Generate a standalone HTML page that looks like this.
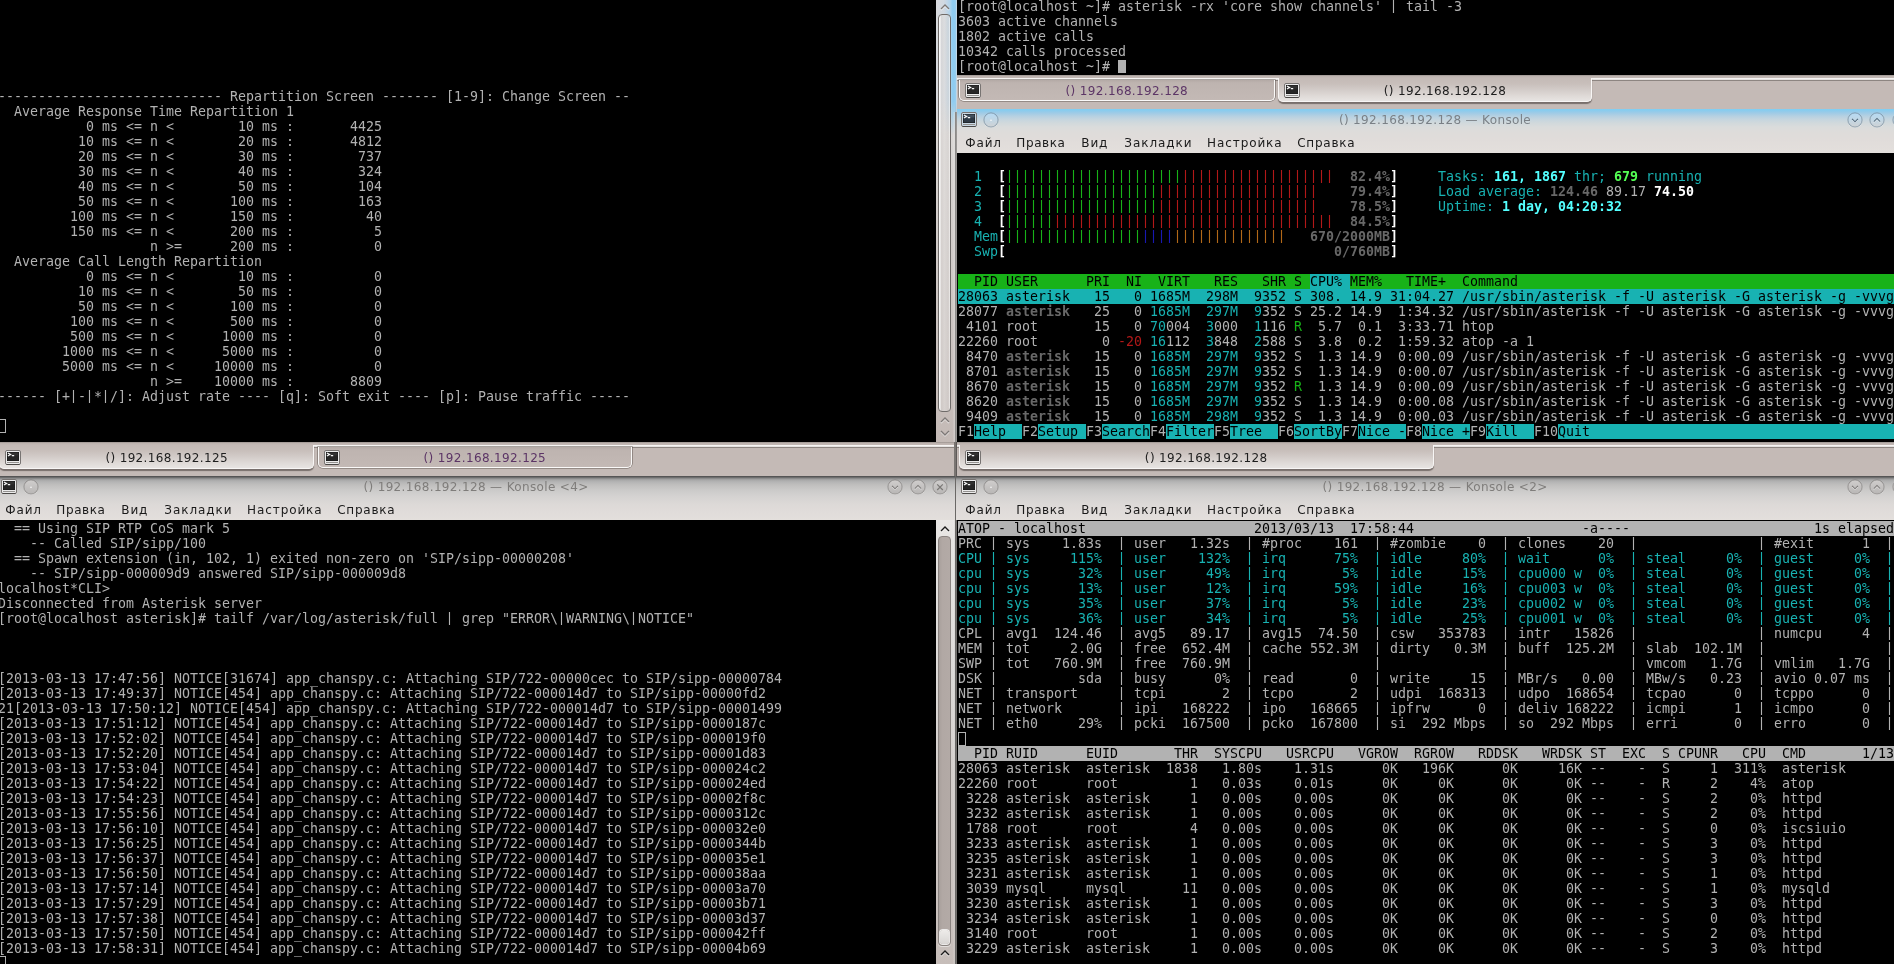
<!DOCTYPE html>
<html lang="ru"><head><meta charset="utf-8"><title>Konsole</title>
<style>
html,body{margin:0;padding:0}
body{width:1894px;height:964px;position:relative;overflow:hidden;background:#c4bab6;font-family:"DejaVu Sans","Liberation Sans",sans-serif;font-size:12px;letter-spacing:.35px;color:#1e1e1e}
#root{position:absolute;left:0;top:0;width:1894px;height:964px;overflow:hidden;will-change:transform}
.term{position:absolute;background:#000;overflow:hidden}
.tx{position:absolute;font-family:"DejaVu Sans Mono","Liberation Mono",monospace;font-size:13.288px;line-height:15px;letter-spacing:.0133px;color:#b2b2b2;white-space:pre}
.ln{height:15px;white-space:pre}
.ln span{display:inline-block;height:15px;vertical-align:top}
.ln span.br{position:relative;left:-.5px;clip-path:inset(1px 0 1px 0)}
.abs{position:absolute}
.cur{position:absolute;width:8px;height:14px;border:1px solid #b2b2b2;box-sizing:border-box}
.menubar{position:absolute;width:1894px;white-space:nowrap;color:#1a1a1a}
.mi{position:absolute;top:0}
.title{position:absolute;height:44px;background:linear-gradient(#4c4c4c 0,#5e5e5e 1px,#7e7e7e 2px,#989898 3px,#a8a8a8 4px,#b5b5b5 6px,#c0bfbe 9px,#cbcac9 14px,#d4d2d1 20px,#dcd9d7 28px,#e0dcda 36px,#e3dfdc 44px)}
.title.act{background:linear-gradient(#80cef2 0,#8ecbec 2px,#9fcbe6 4px,#b4d0e2 7px,#c4d5df 10px,#d1d9dc 14px,#dadcdc 18px,#dedcda 23px,#e0dcda 30px,#e3dfdc 44px)}
.tt{position:absolute;left:0;right:0;top:0;height:22px;line-height:23px;text-align:center;color:#7f7d7b;white-space:nowrap}
.title.act .tt{color:#7a8086}
.tabbar{position:absolute;height:34px;background:linear-gradient(#9c9490 0,#beb4b0 1.5px,#c4bab6 3px)}
.tbl{position:absolute;left:0;right:0;top:3.2px;height:2.4px;background:linear-gradient(#f6f4f3 0,#f6f4f3 48%,#8d8581 60%,#8d8581 88%,#c4bab6 100%)}
.tab{position:absolute;box-sizing:border-box;height:21px;line-height:22px;padding-left:20px;text-align:center;color:#5c3566;white-space:nowrap;background:linear-gradient(#b4aaa6 0,#beb4b0 3px,#c3b9b5 100%);border:1.3px solid #fbfaf9;border-top:none;border-radius:0 0 5px 5px;box-shadow:0 0 0 .8px rgba(80,72,68,.55)}
.tab.on{height:24px;line-height:27px;color:#1e1e1e;background:linear-gradient(#c4bab6 0,#c8bfbb 25%,#d2cbc8 50%,#dfdad7 78%,#e7e4e2 100%);border:1.4px solid #f8f6f5;border-top:none;border-radius:0 0 5px 5px;box-shadow:0 1.2px 1px rgba(70,62,58,.6)}
</style></head><body><div id="root">
<div class="term" style="left:0px;top:0px;width:936px;height:442px"><div class="tx" style="left:-2px;top:-1px"><div class="ln"> </div><div class="ln"> </div><div class="ln"> </div><div class="ln"> </div><div class="ln"> </div><div class="ln"> </div><div class="ln">---------------------------- Repartition Screen ------- [1-9]: Change Screen --</div><div class="ln">  Average Response Time Repartition 1</div><div class="ln">           0 ms &lt;= n &lt;        10 ms :       4425</div><div class="ln">          10 ms &lt;= n &lt;        20 ms :       4812</div><div class="ln">          20 ms &lt;= n &lt;        30 ms :        737</div><div class="ln">          30 ms &lt;= n &lt;        40 ms :        324</div><div class="ln">          40 ms &lt;= n &lt;        50 ms :        104</div><div class="ln">          50 ms &lt;= n &lt;       100 ms :        163</div><div class="ln">         100 ms &lt;= n &lt;       150 ms :         40</div><div class="ln">         150 ms &lt;= n &lt;       200 ms :          5</div><div class="ln">                   n &gt;=      200 ms :          0</div><div class="ln">  Average Call Length Repartition</div><div class="ln">           0 ms &lt;= n &lt;        10 ms :          0</div><div class="ln">          10 ms &lt;= n &lt;        50 ms :          0</div><div class="ln">          50 ms &lt;= n &lt;       100 ms :          0</div><div class="ln">         100 ms &lt;= n &lt;       500 ms :          0</div><div class="ln">         500 ms &lt;= n &lt;      1000 ms :          0</div><div class="ln">        1000 ms &lt;= n &lt;      5000 ms :          0</div><div class="ln">        5000 ms &lt;= n &lt;     10000 ms :          0</div><div class="ln">                   n &gt;=    10000 ms :       8809</div><div class="ln">------ [+<span class="br">|</span>-<span class="br">|</span>*<span class="br">|</span>/]: Adjust rate ---- [q]: Soft exit ---- [p]: Pause traffic -----</div><div class="ln"> </div><div class="ln"> </div></div><div class="cur" style="left:-2px;top:419px"></div></div>
<div class="term" style="left:957px;top:0px;width:937px;height:75px"><div class="tx" style="left:1px;top:-1px"><div class="ln">[root@localhost ~]# asterisk -rx 'core show channels' <span class="br">|</span> tail -3</div><div class="ln">3603 active channels</div><div class="ln">1802 active calls</div><div class="ln">10342 calls processed</div><div class="ln">[root@localhost ~]# </div></div><div class="abs" style="left:161px;top:60px;width:8px;height:13px;background:#b2b2b2"></div></div>
<div class="term" style="left:957px;top:153px;width:937px;height:289px"><div class="tx" style="left:1px;top:1px"><div class="ln"> </div><div class="ln">  <span style="color:#18b2b2">1  </span><span style="color:#ffffff;font-weight:bold">[</span><span class="br" style="color:#18b218">||||||||||||||||||||||</span><span class="br" style="color:#b21818">|||||||||||||||||||</span>  <span style="color:#686868;font-weight:bold">82.4%</span><span style="color:#ffffff;font-weight:bold">]</span>     <span style="color:#18b2b2">Tasks: </span><span style="color:#54ffff;font-weight:bold">161</span><span style="color:#54ffff;font-weight:bold">, </span><span style="color:#54ffff;font-weight:bold">1867</span><span style="color:#18b2b2"> thr; </span><span style="color:#54ff54;font-weight:bold">679</span><span style="color:#18b2b2"> running</span></div><div class="ln">  <span style="color:#18b2b2">2  </span><span style="color:#ffffff;font-weight:bold">[</span><span class="br" style="color:#18b218">|||||||||||||||||||</span><span class="br" style="color:#b21818">||||||||||||||||||||</span>    <span style="color:#686868;font-weight:bold">79.4%</span><span style="color:#ffffff;font-weight:bold">]</span>     <span style="color:#18b2b2">Load average: </span><span style="color:#686868;font-weight:bold">124.46 </span><span style="color:#b2b2b2">89.17 </span><span style="color:#ffffff;font-weight:bold">74.50</span></div><div class="ln">  <span style="color:#18b2b2">3  </span><span style="color:#ffffff;font-weight:bold">[</span><span class="br" style="color:#18b218">|||||||||||||||||||</span><span class="br" style="color:#b21818">||||||||||||||||||||</span>    <span style="color:#686868;font-weight:bold">78.5%</span><span style="color:#ffffff;font-weight:bold">]</span>     <span style="color:#18b2b2">Uptime: </span><span style="color:#54ffff;font-weight:bold">1 day, 04:20:32</span></div><div class="ln">  <span style="color:#18b2b2">4  </span><span style="color:#ffffff;font-weight:bold">[</span><span class="br" style="color:#18b218">||||||</span><span class="br" style="color:#b21818">|||||||||||||||||||||||||||||||||||</span>  <span style="color:#686868;font-weight:bold">84.5%</span><span style="color:#ffffff;font-weight:bold">]</span></div><div class="ln">  <span style="color:#18b2b2">Mem</span><span style="color:#ffffff;font-weight:bold">[</span><span class="br" style="color:#18b218">|||||||||||||||||</span><span class="br" style="color:#1818b2">||||</span><span class="br" style="color:#b26818">||||||||||||||</span>   <span style="color:#686868;font-weight:bold">670/2000MB</span><span style="color:#ffffff;font-weight:bold">]</span></div><div class="ln">  <span style="color:#18b2b2">Swp</span><span style="color:#ffffff;font-weight:bold">[</span>                                         <span style="color:#686868;font-weight:bold">0/760MB</span><span style="color:#ffffff;font-weight:bold">]</span></div><div class="ln"> </div><div class="ln"><span style="color:#000000;background:#18b218">  PID USER      PRI  NI  VIRT   RES   SHR S </span><span style="color:#000000;background:#18b2b2">CPU% </span><span style="color:#000000;background:#18b218">MEM%   TIME+  Command                                                </span></div><div class="ln"><span style="color:#000000;background:#18b2b2">28063 asterisk   15   0 1685M  298M  9352 S 308. 14.9 31:04.27 /usr/sbin/asterisk -f -U asterisk -G asterisk -g -vvvg </span></div><div class="ln">28077 <span style="color:#686868;font-weight:bold">asterisk  </span> 25   0 <span style="color:#18b2b2">1685M</span> <span style="color:#18b2b2"> 297M</span> <span style="color:#18b2b2"> 9</span>352 S 25.2 14.9  1:34.32 /usr/sbin/asterisk -f -U asterisk -G asterisk -g -vvvg</div><div class="ln"> 4101 root       15   0 <span style="color:#18b2b2">70</span>004 <span style="color:#18b2b2"> 3</span>000 <span style="color:#18b2b2"> 1</span>116 <span style="color:#18b218">R</span>  5.7  0.1  3:33.71 htop</div><div class="ln">22260 root        0 <span style="color:#b21818">-20</span> <span style="color:#18b2b2">16</span>112 <span style="color:#18b2b2"> 3</span>848 <span style="color:#18b2b2"> 2</span>588 S  3.8  0.2  1:59.32 atop -a 1</div><div class="ln"> 8470 <span style="color:#686868;font-weight:bold">asterisk  </span> 15   0 <span style="color:#18b2b2">1685M</span> <span style="color:#18b2b2"> 297M</span> <span style="color:#18b2b2"> 9</span>352 S  1.3 14.9  0:00.09 /usr/sbin/asterisk -f -U asterisk -G asterisk -g -vvvg</div><div class="ln"> 8701 <span style="color:#686868;font-weight:bold">asterisk  </span> 15   0 <span style="color:#18b2b2">1685M</span> <span style="color:#18b2b2"> 297M</span> <span style="color:#18b2b2"> 9</span>352 S  1.3 14.9  0:00.07 /usr/sbin/asterisk -f -U asterisk -G asterisk -g -vvvg</div><div class="ln"> 8670 <span style="color:#686868;font-weight:bold">asterisk  </span> 15   0 <span style="color:#18b2b2">1685M</span> <span style="color:#18b2b2"> 297M</span> <span style="color:#18b2b2"> 9</span>352 <span style="color:#18b218">R</span>  1.3 14.9  0:00.09 /usr/sbin/asterisk -f -U asterisk -G asterisk -g -vvvg</div><div class="ln"> 8620 <span style="color:#686868;font-weight:bold">asterisk  </span> 15   0 <span style="color:#18b2b2">1685M</span> <span style="color:#18b2b2"> 297M</span> <span style="color:#18b2b2"> 9</span>352 S  1.3 14.9  0:00.08 /usr/sbin/asterisk -f -U asterisk -G asterisk -g -vvvg</div><div class="ln"> 9409 <span style="color:#686868;font-weight:bold">asterisk  </span> 15   0 <span style="color:#18b2b2">1685M</span> <span style="color:#18b2b2"> 298M</span> <span style="color:#18b2b2"> 9</span>352 S  1.3 14.9  0:00.03 /usr/sbin/asterisk -f -U asterisk -G asterisk -g -vvvg</div><div class="ln"><span style="color:#b2b2b2">F1</span><span style="color:#000000;background:#18b2b2">Help  </span><span style="color:#b2b2b2">F2</span><span style="color:#000000;background:#18b2b2">Setup </span><span style="color:#b2b2b2">F3</span><span style="color:#000000;background:#18b2b2">Search</span><span style="color:#b2b2b2">F4</span><span style="color:#000000;background:#18b2b2">Filter</span><span style="color:#b2b2b2">F5</span><span style="color:#000000;background:#18b2b2">Tree  </span><span style="color:#b2b2b2">F6</span><span style="color:#000000;background:#18b2b2">SortBy</span><span style="color:#b2b2b2">F7</span><span style="color:#000000;background:#18b2b2">Nice -</span><span style="color:#b2b2b2">F8</span><span style="color:#000000;background:#18b2b2">Nice +</span><span style="color:#b2b2b2">F9</span><span style="color:#000000;background:#18b2b2">Kill  </span><span style="color:#b2b2b2">F10</span><span style="color:#000000;background:#18b2b2">Quit                                       </span></div></div></div>
<div class="term" style="left:0px;top:520px;width:936px;height:444px"><div class="tx" style="left:-2px;top:1px"><div class="ln">  == Using SIP RTP CoS mark 5</div><div class="ln">    -- Called SIP/sipp/100</div><div class="ln">  == Spawn extension (in, 102, 1) exited non-zero on 'SIP/sipp-00000208'</div><div class="ln">    -- SIP/sipp-000009d9 answered SIP/sipp-000009d8</div><div class="ln">localhost*CLI&gt; </div><div class="ln">Disconnected from Asterisk server</div><div class="ln">[root@localhost asterisk]# tailf /var/log/asterisk/full <span class="br">|</span> grep "ERROR\<span class="br">|</span>WARNING\<span class="br">|</span>NOTICE"</div><div class="ln"> </div><div class="ln"> </div><div class="ln"> </div><div class="ln">[2013-03-13 17:47:56] NOTICE[31674] app_chanspy.c: Attaching SIP/722-00000cec to SIP/sipp-00000784</div><div class="ln">[2013-03-13 17:49:37] NOTICE[454] app_chanspy.c: Attaching SIP/722-000014d7 to SIP/sipp-00000fd2</div><div class="ln">21[2013-03-13 17:50:12] NOTICE[454] app_chanspy.c: Attaching SIP/722-000014d7 to SIP/sipp-00001499</div><div class="ln">[2013-03-13 17:51:12] NOTICE[454] app_chanspy.c: Attaching SIP/722-000014d7 to SIP/sipp-0000187c</div><div class="ln">[2013-03-13 17:52:02] NOTICE[454] app_chanspy.c: Attaching SIP/722-000014d7 to SIP/sipp-000019f0</div><div class="ln">[2013-03-13 17:52:20] NOTICE[454] app_chanspy.c: Attaching SIP/722-000014d7 to SIP/sipp-00001d83</div><div class="ln">[2013-03-13 17:53:04] NOTICE[454] app_chanspy.c: Attaching SIP/722-000014d7 to SIP/sipp-000024c2</div><div class="ln">[2013-03-13 17:54:22] NOTICE[454] app_chanspy.c: Attaching SIP/722-000014d7 to SIP/sipp-000024ed</div><div class="ln">[2013-03-13 17:54:23] NOTICE[454] app_chanspy.c: Attaching SIP/722-000014d7 to SIP/sipp-00002f8c</div><div class="ln">[2013-03-13 17:55:56] NOTICE[454] app_chanspy.c: Attaching SIP/722-000014d7 to SIP/sipp-0000312c</div><div class="ln">[2013-03-13 17:56:10] NOTICE[454] app_chanspy.c: Attaching SIP/722-000014d7 to SIP/sipp-000032e0</div><div class="ln">[2013-03-13 17:56:25] NOTICE[454] app_chanspy.c: Attaching SIP/722-000014d7 to SIP/sipp-0000344b</div><div class="ln">[2013-03-13 17:56:37] NOTICE[454] app_chanspy.c: Attaching SIP/722-000014d7 to SIP/sipp-000035e1</div><div class="ln">[2013-03-13 17:56:50] NOTICE[454] app_chanspy.c: Attaching SIP/722-000014d7 to SIP/sipp-000038aa</div><div class="ln">[2013-03-13 17:57:14] NOTICE[454] app_chanspy.c: Attaching SIP/722-000014d7 to SIP/sipp-00003a70</div><div class="ln">[2013-03-13 17:57:29] NOTICE[454] app_chanspy.c: Attaching SIP/722-000014d7 to SIP/sipp-00003b71</div><div class="ln">[2013-03-13 17:57:38] NOTICE[454] app_chanspy.c: Attaching SIP/722-000014d7 to SIP/sipp-00003d37</div><div class="ln">[2013-03-13 17:57:50] NOTICE[454] app_chanspy.c: Attaching SIP/722-000014d7 to SIP/sipp-000042ff</div><div class="ln">[2013-03-13 17:58:31] NOTICE[454] app_chanspy.c: Attaching SIP/722-000014d7 to SIP/sipp-00004b69</div></div><div class="cur" style="left:-2px;top:436px"></div></div>
<div class="term" style="left:957px;top:520px;width:937px;height:444px"><div class="tx" style="left:1px;top:1px"><div class="ln"><span style="color:#000000;background:#b2b2b2">ATOP - localhost                     2013/03/13  17:58:44                     -a----                       1s elapsed </span></div><div class="ln">PRC <span class="br">|</span> sys    1.83s  <span class="br">|</span> user   1.32s  <span class="br">|</span> #proc    161  <span class="br">|</span> #zombie    0  <span class="br">|</span> clones    20  <span class="br">|</span>               <span class="br">|</span> #exit      1  <span class="br">|</span></div><div class="ln"><span style="color:#18b2b2">CPU </span><span class="br" style="color:#18b2b2">|</span><span style="color:#18b2b2"> sys     115%  </span><span class="br" style="color:#18b2b2">|</span><span style="color:#18b2b2"> user    132%  </span><span class="br" style="color:#18b2b2">|</span><span style="color:#18b2b2"> irq      75%  </span><span class="br" style="color:#18b2b2">|</span><span style="color:#18b2b2"> idle     80%  </span><span class="br" style="color:#18b2b2">|</span><span style="color:#18b2b2"> wait      0%  </span><span class="br" style="color:#18b2b2">|</span><span style="color:#18b2b2"> steal     0%  </span><span class="br" style="color:#18b2b2">|</span><span style="color:#18b2b2"> guest     0%  </span><span class="br" style="color:#18b2b2">|</span></div><div class="ln"><span style="color:#18b2b2">cpu </span><span class="br" style="color:#18b2b2">|</span><span style="color:#18b2b2"> sys      32%  </span><span class="br" style="color:#18b2b2">|</span><span style="color:#18b2b2"> user     49%  </span><span class="br" style="color:#18b2b2">|</span><span style="color:#18b2b2"> irq       5%  </span><span class="br" style="color:#18b2b2">|</span><span style="color:#18b2b2"> idle     15%  </span><span class="br" style="color:#18b2b2">|</span><span style="color:#18b2b2"> cpu000 w  0%  </span><span class="br" style="color:#18b2b2">|</span><span style="color:#18b2b2"> steal     0%  </span><span class="br" style="color:#18b2b2">|</span><span style="color:#18b2b2"> guest     0%  </span><span class="br" style="color:#18b2b2">|</span></div><div class="ln"><span style="color:#18b2b2">cpu </span><span class="br" style="color:#18b2b2">|</span><span style="color:#18b2b2"> sys      13%  </span><span class="br" style="color:#18b2b2">|</span><span style="color:#18b2b2"> user     12%  </span><span class="br" style="color:#18b2b2">|</span><span style="color:#18b2b2"> irq      59%  </span><span class="br" style="color:#18b2b2">|</span><span style="color:#18b2b2"> idle     16%  </span><span class="br" style="color:#18b2b2">|</span><span style="color:#18b2b2"> cpu003 w  0%  </span><span class="br" style="color:#18b2b2">|</span><span style="color:#18b2b2"> steal     0%  </span><span class="br" style="color:#18b2b2">|</span><span style="color:#18b2b2"> guest     0%  </span><span class="br" style="color:#18b2b2">|</span></div><div class="ln"><span style="color:#18b2b2">cpu </span><span class="br" style="color:#18b2b2">|</span><span style="color:#18b2b2"> sys      35%  </span><span class="br" style="color:#18b2b2">|</span><span style="color:#18b2b2"> user     37%  </span><span class="br" style="color:#18b2b2">|</span><span style="color:#18b2b2"> irq       5%  </span><span class="br" style="color:#18b2b2">|</span><span style="color:#18b2b2"> idle     23%  </span><span class="br" style="color:#18b2b2">|</span><span style="color:#18b2b2"> cpu002 w  0%  </span><span class="br" style="color:#18b2b2">|</span><span style="color:#18b2b2"> steal     0%  </span><span class="br" style="color:#18b2b2">|</span><span style="color:#18b2b2"> guest     0%  </span><span class="br" style="color:#18b2b2">|</span></div><div class="ln"><span style="color:#18b2b2">cpu </span><span class="br" style="color:#18b2b2">|</span><span style="color:#18b2b2"> sys      36%  </span><span class="br" style="color:#18b2b2">|</span><span style="color:#18b2b2"> user     34%  </span><span class="br" style="color:#18b2b2">|</span><span style="color:#18b2b2"> irq       5%  </span><span class="br" style="color:#18b2b2">|</span><span style="color:#18b2b2"> idle     25%  </span><span class="br" style="color:#18b2b2">|</span><span style="color:#18b2b2"> cpu001 w  0%  </span><span class="br" style="color:#18b2b2">|</span><span style="color:#18b2b2"> steal     0%  </span><span class="br" style="color:#18b2b2">|</span><span style="color:#18b2b2"> guest     0%  </span><span class="br" style="color:#18b2b2">|</span></div><div class="ln">CPL <span class="br">|</span> avg1  124.46  <span class="br">|</span> avg5   89.17  <span class="br">|</span> avg15  74.50  <span class="br">|</span> csw   353783  <span class="br">|</span> intr   15826  <span class="br">|</span>               <span class="br">|</span> numcpu     4  <span class="br">|</span></div><div class="ln">MEM <span class="br">|</span> tot     2.0G  <span class="br">|</span> free  652.4M  <span class="br">|</span> cache 552.3M  <span class="br">|</span> dirty   0.3M  <span class="br">|</span> buff  125.2M  <span class="br">|</span> slab  102.1M  <span class="br">|</span>               <span class="br">|</span></div><div class="ln">SWP <span class="br">|</span> tot   760.9M  <span class="br">|</span> free  760.9M  <span class="br">|</span>               <span class="br">|</span>               <span class="br">|</span>               <span class="br">|</span> vmcom   1.7G  <span class="br">|</span> vmlim   1.7G  <span class="br">|</span></div><div class="ln">DSK <span class="br">|</span>          sda  <span class="br">|</span> busy      0%  <span class="br">|</span> read       0  <span class="br">|</span> write     15  <span class="br">|</span> MBr/s   0.00  <span class="br">|</span> MBw/s   0.23  <span class="br">|</span> avio 0.07 ms  <span class="br">|</span></div><div class="ln">NET <span class="br">|</span> transport     <span class="br">|</span> tcpi       2  <span class="br">|</span> tcpo       2  <span class="br">|</span> udpi  168313  <span class="br">|</span> udpo  168654  <span class="br">|</span> tcpao      0  <span class="br">|</span> tcppo      0  <span class="br">|</span></div><div class="ln">NET <span class="br">|</span> network       <span class="br">|</span> ipi   168222  <span class="br">|</span> ipo   168665  <span class="br">|</span> ipfrw      0  <span class="br">|</span> deliv 168222  <span class="br">|</span> icmpi      1  <span class="br">|</span> icmpo      0  <span class="br">|</span></div><div class="ln">NET <span class="br">|</span> eth0     29%  <span class="br">|</span> pcki  167500  <span class="br">|</span> pcko  167800  <span class="br">|</span> si  292 Mbps  <span class="br">|</span> so  292 Mbps  <span class="br">|</span> erri       0  <span class="br">|</span> erro       0  <span class="br">|</span></div><div class="ln"> </div><div class="ln"><span style="color:#000000;background:#b2b2b2">  PID RUID      EUID       THR  SYSCPU   USRCPU   VGROW  RGROW   RDDSK   WRDSK ST  EXC  S CPUNR   CPU  CMD       1/13 </span></div><div class="ln">28063 asterisk  asterisk  1838   1.80s    1.31s      0K   196K      0K     16K --    -  S     1  311%  asterisk</div><div class="ln">22260 root      root         1   0.03s    0.01s      0K     0K      0K      0K --    -  R     2    4%  atop</div><div class="ln"> 3228 asterisk  asterisk     1   0.00s    0.00s      0K     0K      0K      0K --    -  S     2    0%  httpd</div><div class="ln"> 3232 asterisk  asterisk     1   0.00s    0.00s      0K     0K      0K      0K --    -  S     2    0%  httpd</div><div class="ln"> 1788 root      root         4   0.00s    0.00s      0K     0K      0K      0K --    -  S     0    0%  iscsiuio</div><div class="ln"> 3233 asterisk  asterisk     1   0.00s    0.00s      0K     0K      0K      0K --    -  S     3    0%  httpd</div><div class="ln"> 3235 asterisk  asterisk     1   0.00s    0.00s      0K     0K      0K      0K --    -  S     3    0%  httpd</div><div class="ln"> 3231 asterisk  asterisk     1   0.00s    0.00s      0K     0K      0K      0K --    -  S     1    0%  httpd</div><div class="ln"> 3039 mysql     mysql       11   0.00s    0.00s      0K     0K      0K      0K --    -  S     1    0%  mysqld</div><div class="ln"> 3230 asterisk  asterisk     1   0.00s    0.00s      0K     0K      0K      0K --    -  S     3    0%  httpd</div><div class="ln"> 3234 asterisk  asterisk     1   0.00s    0.00s      0K     0K      0K      0K --    -  S     0    0%  httpd</div><div class="ln"> 3140 root      root         1   0.00s    0.00s      0K     0K      0K      0K --    -  S     2    0%  httpd</div><div class="ln"> 3229 asterisk  asterisk     1   0.00s    0.00s      0K     0K      0K      0K --    -  S     3    0%  httpd</div></div><div class="cur" style="left:1px;top:212px"></div></div>
<div class="abs" style="left:936px;top:0;width:19px;height:442px;background:linear-gradient(#e0dedc 0,#dad7d5 30%,#cdc6c3 70%,#c4bab6 100%)"></div><div class="abs" style="left:936px;top:520px;width:19px;height:444px;background:linear-gradient(#e8e6e4 0,#dcd9d7 35%,#cdc6c3 75%,#c6bdb9 100%)"></div><div class="abs" style="left:936px;top:0;width:21px;height:135px;background:linear-gradient(90deg,rgba(215,218,224,.6) 0,rgba(200,214,228,.7) 40%,rgba(170,210,238,.85) 65%,rgba(140,203,240,1) 80%,rgba(150,206,240,1) 95%,rgba(232,222,220,1) 100%);-webkit-mask-image:linear-gradient(#000 75%,transparent);mask-image:linear-gradient(#000 75%,transparent)"></div><div class="abs" style="left:938px;top:14px;width:13px;height:398px;box-sizing:border-box;border:1.6px solid #6f6b69;border-radius:4px;background:linear-gradient(90deg,rgba(250,250,250,.9) 0,rgba(250,250,250,.9) 1.2px,rgba(214,210,208,.55) 2px,rgba(226,223,221,.6) 50%,rgba(214,210,208,.55) 85%,rgba(248,247,246,.85) 100%)"></div><svg class="abs" width="14" height="12" viewBox="-7 -6 14 12" style="left:937.5px;top:0.5px"><path d="M-4 2 L0 -2 L4 2" transform="translate(0,1)" stroke="#fff" stroke-opacity=".8" stroke-width="1.1" fill="none"/><path d="M-4 2 L0 -2 L4 2" stroke="#7d7876" stroke-width="1.4" fill="none"/></svg><svg class="abs" width="14" height="12" viewBox="-7 -6 14 12" style="left:937.5px;top:413.5px"><path d="M-4 2 L0 -2 L4 2" transform="translate(0,1)" stroke="#fff" stroke-opacity=".8" stroke-width="1.1" fill="none"/><path d="M-4 2 L0 -2 L4 2" stroke="#7d7876" stroke-width="1.4" fill="none"/></svg><svg class="abs" width="14" height="12" viewBox="-7 -6 14 12" style="left:937.5px;top:427.0px"><path d="M-4 -2 L0 2 L4 -2" transform="translate(0,1)" stroke="#fff" stroke-opacity=".8" stroke-width="1.1" fill="none"/><path d="M-4 -2 L0 2 L4 -2" stroke="#7d7876" stroke-width="1.4" fill="none"/></svg><div class="abs" style="left:938px;top:536px;width:13px;height:410px;box-sizing:border-box;border:1px solid #8a8380;border-radius:4px;background:linear-gradient(90deg,#a8a09c 0,#b1a8a4 30%,#b3aaa6 100%);box-shadow:0 1px 0 rgba(255,255,255,.5)"></div><div class="abs" style="left:940px;top:930px;width:9px;height:14px;border-radius:2.5px;background:linear-gradient(#eeecea,#d8d5d3);box-shadow:0 0 0 .7px #fff"></div><svg class="abs" width="14" height="12" viewBox="-7 -6 14 12" style="left:937.5px;top:522.8px"><path d="M-4 2 L0 -2 L4 2" transform="translate(0,1)" stroke="#fff" stroke-opacity=".8" stroke-width="1.1" fill="none"/><path d="M-4 2 L0 -2 L4 2" stroke="#1a1a1a" stroke-width="1.4" fill="none"/></svg><svg class="abs" width="14" height="12" viewBox="-7 -6 14 12" style="left:937.5px;top:946.8px"><path d="M-4 2 L0 -2 L4 2" transform="translate(0,1)" stroke="#fff" stroke-opacity=".8" stroke-width="1.1" fill="none"/><path d="M-4 2 L0 -2 L4 2" stroke="#1a1a1a" stroke-width="1.4" fill="none"/></svg>
<div class="abs" style="left:953px;top:112px;width:4px;height:330px;background:linear-gradient(90deg,rgba(255,255,255,0) 0,rgba(255,255,255,.35) 35%,#8c8a88 60%,#8c8a88 82%,#b8b4b2 100%)"></div>
<div class="abs" style="left:953px;top:442px;width:4px;height:34px;background:linear-gradient(90deg,rgba(255,255,255,0) 0,rgba(255,255,255,.35) 35%,#55514f 55%,#55514f 85%,#8a8582 100%)"></div>
<div class="abs" style="left:953px;top:476px;width:4px;height:488px;background:linear-gradient(90deg,rgba(255,255,255,0) 0,rgba(255,255,255,.3) 35%,#6a6866 58%,#6a6866 85%,#a09c9a 100%)"></div>
<div class="tabbar" style="left:957px;top:75px;width:937px"><div class="tbl"></div></div>
<div class="tab" style="left:959.0px;top:79.5px;width:315.7px">() 192.168.192.128</div>
<svg class="abs" width="16" height="15" viewBox="0 0 16 15" style="left:965.0px;top:83.0px"><rect x="0.5" y="0.5" width="15" height="14" rx="1.5" fill="#ebebeb" stroke="#787472" stroke-width="1"/><path d="M1.5 14.5 H14.5" stroke="#4a4846" stroke-width="1"/><rect x="2" y="2" width="12" height="9" fill="#161616"/><rect x="2.5" y="2.5" width="11" height="8" fill="#262626"/><rect x="2.5" y="2.5" width="11" height="3" fill="#3a3a3a" opacity=".6"/><path d="M2.9 3 L5.7 4.5 L2.9 6 M6.8 5.6 H9.2" stroke="#fafafa" stroke-width="1.1" fill="none"/><rect x="2" y="12" width="12" height="1" fill="#959391"/></svg><div class="tab on" style="left:1277.7px;top:78px;width:314.6px">() 192.168.192.128</div>
<svg class="abs" width="16" height="15" viewBox="0 0 16 15" style="left:1283.7px;top:83.0px"><rect x="0.5" y="0.5" width="15" height="14" rx="1.5" fill="#ebebeb" stroke="#787472" stroke-width="1"/><path d="M1.5 14.5 H14.5" stroke="#4a4846" stroke-width="1"/><rect x="2" y="2" width="12" height="9" fill="#161616"/><rect x="2.5" y="2.5" width="11" height="8" fill="#262626"/><rect x="2.5" y="2.5" width="11" height="3" fill="#3a3a3a" opacity=".6"/><path d="M2.9 3 L5.7 4.5 L2.9 6 M6.8 5.6 H9.2" stroke="#fafafa" stroke-width="1.1" fill="none"/><rect x="2" y="12" width="12" height="1" fill="#959391"/></svg><div class="title act" style="left:957px;top:109px;width:956px"><div class="tt">() 192.168.192.128 — Konsole</div></div>
<svg class="abs" width="16" height="15" viewBox="0 0 16 15" style="left:961.2px;top:112.0px"><rect x="0.5" y="0.5" width="15" height="14" rx="1.5" fill="#c9d9e5" stroke="#787472" stroke-width="1"/><path d="M1.5 14.5 H14.5" stroke="#4a4846" stroke-width="1"/><rect x="2" y="2" width="12" height="9" fill="#161616"/><rect x="2.5" y="2.5" width="11" height="8" fill="#2e3a46"/><rect x="2.5" y="2.5" width="11" height="3" fill="#51606e" opacity=".6"/><path d="M2.9 3 L5.7 4.5 L2.9 6 M6.8 5.6 H9.2" stroke="#fafafa" stroke-width="1.1" fill="none"/><rect x="2" y="12" width="12" height="1" fill="#959391"/></svg><svg class="abs" width="18" height="18" viewBox="-9 -9 18 18" style="left:982.4px;top:110.8px"><defs><linearGradient id="g1" x1="0" y1="0" x2="0" y2="1"><stop offset="0" stop-color="#b4daf4"/><stop offset="1" stop-color="#cfd2d4"/></linearGradient></defs><circle cx="0" cy="0.6" r="7.3" fill="#fff" fill-opacity=".55"/><circle cx="0" cy="0" r="7.1" fill="url(#g1)" stroke="#6d8496" stroke-width="0.7"/><circle cx="0" cy="0.3" r="0.8" fill="#fafafa"/></svg><svg class="abs" width="18" height="18" viewBox="-9 -9 18 18" style="left:1845.5px;top:110.8px"><defs><linearGradient id="g2" x1="0" y1="0" x2="0" y2="1"><stop offset="0" stop-color="#b4daf4"/><stop offset="1" stop-color="#cfd2d4"/></linearGradient></defs><circle cx="0" cy="0.6" r="7.3" fill="#fff" fill-opacity=".55"/><circle cx="0" cy="0" r="7.1" fill="url(#g2)" stroke="#6d8496" stroke-width="0.7"/><path d="M-3 -1.2 L0 1.8 L3 -1.2" stroke="#4f677a" stroke-width="1.2" fill="none"/><path d="M-3 -0.2 L0 2.8 L3 -0.2" stroke="#fff" stroke-opacity=".7" stroke-width="0.8" fill="none"/></svg><svg class="abs" width="18" height="18" viewBox="-9 -9 18 18" style="left:1868.4px;top:110.8px"><defs><linearGradient id="g3" x1="0" y1="0" x2="0" y2="1"><stop offset="0" stop-color="#b4daf4"/><stop offset="1" stop-color="#cfd2d4"/></linearGradient></defs><circle cx="0" cy="0.6" r="7.3" fill="#fff" fill-opacity=".55"/><circle cx="0" cy="0" r="7.1" fill="url(#g3)" stroke="#6d8496" stroke-width="0.7"/><path d="M-3 1.6 L0 -1.4 L3 1.6" stroke="#4f677a" stroke-width="1.2" fill="none"/><path d="M-3 2.6 L0 -0.4 L3 2.6" stroke="#fff" stroke-opacity=".7" stroke-width="0.8" fill="none"/></svg><svg class="abs" width="18" height="18" viewBox="-9 -9 18 18" style="left:1891.4px;top:110.8px"><defs><linearGradient id="g4" x1="0" y1="0" x2="0" y2="1"><stop offset="0" stop-color="#b4daf4"/><stop offset="1" stop-color="#cfd2d4"/></linearGradient></defs><circle cx="0" cy="0.6" r="7.3" fill="#fff" fill-opacity=".55"/><circle cx="0" cy="0" r="7.1" fill="url(#g4)" stroke="#6d8496" stroke-width="0.7"/><path d="M-2.8 -2.6 L2.8 3 M2.8 -2.6 L-2.8 3" stroke="#4f677a" stroke-width="1.2" fill="none"/></svg><div class="menubar" style="left:0;top:132px;height:22px;line-height:22px"><span class="mi" style="left:965.3px;letter-spacing:0.85px">Файл</span><span class="mi" style="left:1016.3px;letter-spacing:0.60px">Правка</span><span class="mi" style="left:1081.3px;letter-spacing:0.85px">Вид</span><span class="mi" style="left:1124.3px;letter-spacing:0.95px">Закладки</span><span class="mi" style="left:1207.1px;letter-spacing:0.90px">Настройка</span><span class="mi" style="left:1297.2px;letter-spacing:0.77px">Справка</span></div>
<div class="tabbar" style="left:957px;top:442px;width:937px"><div class="tbl"></div></div>
<div class="tab on" style="left:958.6px;top:445px;width:475.1px">() 192.168.192.128</div>
<svg class="abs" width="16" height="15" viewBox="0 0 16 15" style="left:964.6px;top:450.0px"><rect x="0.5" y="0.5" width="15" height="14" rx="1.5" fill="#ebebeb" stroke="#787472" stroke-width="1"/><path d="M1.5 14.5 H14.5" stroke="#4a4846" stroke-width="1"/><rect x="2" y="2" width="12" height="9" fill="#161616"/><rect x="2.5" y="2.5" width="11" height="8" fill="#262626"/><rect x="2.5" y="2.5" width="11" height="3" fill="#3a3a3a" opacity=".6"/><path d="M2.9 3 L5.7 4.5 L2.9 6 M6.8 5.6 H9.2" stroke="#fafafa" stroke-width="1.1" fill="none"/><rect x="2" y="12" width="12" height="1" fill="#959391"/></svg><div class="tabbar" style="left:0px;top:442px;width:955px"><div class="tbl"></div></div>
<div class="tab on" style="left:-1.0px;top:445px;width:315.4px">() 192.168.192.125</div>
<svg class="abs" width="16" height="15" viewBox="0 0 16 15" style="left:5.0px;top:450.0px"><rect x="0.5" y="0.5" width="15" height="14" rx="1.5" fill="#ebebeb" stroke="#787472" stroke-width="1"/><path d="M1.5 14.5 H14.5" stroke="#4a4846" stroke-width="1"/><rect x="2" y="2" width="12" height="9" fill="#161616"/><rect x="2.5" y="2.5" width="11" height="8" fill="#262626"/><rect x="2.5" y="2.5" width="11" height="3" fill="#3a3a3a" opacity=".6"/><path d="M2.9 3 L5.7 4.5 L2.9 6 M6.8 5.6 H9.2" stroke="#fafafa" stroke-width="1.1" fill="none"/><rect x="2" y="12" width="12" height="1" fill="#959391"/></svg><div class="tab" style="left:317.7px;top:446.5px;width:314.3px">() 192.168.192.125</div>
<svg class="abs" width="16" height="15" viewBox="0 0 16 15" style="left:323.7px;top:450.0px"><rect x="0.5" y="0.5" width="15" height="14" rx="1.5" fill="#ebebeb" stroke="#787472" stroke-width="1"/><path d="M1.5 14.5 H14.5" stroke="#4a4846" stroke-width="1"/><rect x="2" y="2" width="12" height="9" fill="#161616"/><rect x="2.5" y="2.5" width="11" height="8" fill="#262626"/><rect x="2.5" y="2.5" width="11" height="3" fill="#3a3a3a" opacity=".6"/><path d="M2.9 3 L5.7 4.5 L2.9 6 M6.8 5.6 H9.2" stroke="#fafafa" stroke-width="1.1" fill="none"/><rect x="2" y="12" width="12" height="1" fill="#959391"/></svg><div class="abs" style="left:954px;top:442px;width:2px;height:34px;background:#7a7572"></div><div class="title" style="left:-3px;top:476px;width:958px"><div class="tt">() 192.168.192.128 — Konsole &lt;4&gt;</div></div>
<svg class="abs" width="16" height="15" viewBox="0 0 16 15" style="left:1.0px;top:479.2px"><rect x="0.5" y="0.5" width="15" height="14" rx="1.5" fill="#ebebeb" stroke="#787472" stroke-width="1"/><path d="M1.5 14.5 H14.5" stroke="#4a4846" stroke-width="1"/><rect x="2" y="2" width="12" height="9" fill="#161616"/><rect x="2.5" y="2.5" width="11" height="8" fill="#262626"/><rect x="2.5" y="2.5" width="11" height="3" fill="#3a3a3a" opacity=".6"/><path d="M2.9 3 L5.7 4.5 L2.9 6 M6.8 5.6 H9.2" stroke="#fafafa" stroke-width="1.1" fill="none"/><rect x="2" y="12" width="12" height="1" fill="#959391"/></svg><svg class="abs" width="18" height="18" viewBox="-9 -9 18 18" style="left:22.4px;top:477.7px"><defs><linearGradient id="g5" x1="0" y1="0" x2="0" y2="1"><stop offset="0" stop-color="#d0cecd"/><stop offset="1" stop-color="#b8b6b5"/></linearGradient></defs><circle cx="0" cy="0.6" r="7.3" fill="#fff" fill-opacity=".55"/><circle cx="0" cy="0" r="7.1" fill="url(#g5)" stroke="#7c7a78" stroke-width="0.7"/><circle cx="0" cy="0.3" r="0.8" fill="#fafafa"/></svg><svg class="abs" width="18" height="18" viewBox="-9 -9 18 18" style="left:885.5px;top:477.7px"><defs><linearGradient id="g6" x1="0" y1="0" x2="0" y2="1"><stop offset="0" stop-color="#d0cecd"/><stop offset="1" stop-color="#b8b6b5"/></linearGradient></defs><circle cx="0" cy="0.6" r="7.3" fill="#fff" fill-opacity=".55"/><circle cx="0" cy="0" r="7.1" fill="url(#g6)" stroke="#7c7a78" stroke-width="0.7"/><path d="M-3 -1.2 L0 1.8 L3 -1.2" stroke="#7a7876" stroke-width="1.2" fill="none"/><path d="M-3 -0.2 L0 2.8 L3 -0.2" stroke="#fff" stroke-opacity=".7" stroke-width="0.8" fill="none"/></svg><svg class="abs" width="18" height="18" viewBox="-9 -9 18 18" style="left:908.5px;top:477.7px"><defs><linearGradient id="g7" x1="0" y1="0" x2="0" y2="1"><stop offset="0" stop-color="#d0cecd"/><stop offset="1" stop-color="#b8b6b5"/></linearGradient></defs><circle cx="0" cy="0.6" r="7.3" fill="#fff" fill-opacity=".55"/><circle cx="0" cy="0" r="7.1" fill="url(#g7)" stroke="#7c7a78" stroke-width="0.7"/><path d="M-3 1.6 L0 -1.4 L3 1.6" stroke="#7a7876" stroke-width="1.2" fill="none"/><path d="M-3 2.6 L0 -0.4 L3 2.6" stroke="#fff" stroke-opacity=".7" stroke-width="0.8" fill="none"/></svg><svg class="abs" width="18" height="18" viewBox="-9 -9 18 18" style="left:931.4px;top:477.7px"><defs><linearGradient id="g8" x1="0" y1="0" x2="0" y2="1"><stop offset="0" stop-color="#d0cecd"/><stop offset="1" stop-color="#b8b6b5"/></linearGradient></defs><circle cx="0" cy="0.6" r="7.3" fill="#fff" fill-opacity=".55"/><circle cx="0" cy="0" r="7.1" fill="url(#g8)" stroke="#7c7a78" stroke-width="0.7"/><path d="M-2.8 -2.6 L2.8 3 M2.8 -2.6 L-2.8 3" stroke="#7a7876" stroke-width="1.2" fill="none"/></svg><div class="menubar" style="left:0;top:499px;height:22px;line-height:22px"><span class="mi" style="left:5.3px;letter-spacing:0.85px">Файл</span><span class="mi" style="left:56.3px;letter-spacing:0.60px">Правка</span><span class="mi" style="left:121.3px;letter-spacing:0.85px">Вид</span><span class="mi" style="left:164.3px;letter-spacing:0.95px">Закладки</span><span class="mi" style="left:247.1px;letter-spacing:0.90px">Настройка</span><span class="mi" style="left:337.2px;letter-spacing:0.77px">Справка</span></div>
<div class="title" style="left:956px;top:476px;width:958px"><div class="tt">() 192.168.192.128 — Konsole &lt;2&gt;</div></div>
<svg class="abs" width="16" height="15" viewBox="0 0 16 15" style="left:961.2px;top:479.2px"><rect x="0.5" y="0.5" width="15" height="14" rx="1.5" fill="#ebebeb" stroke="#787472" stroke-width="1"/><path d="M1.5 14.5 H14.5" stroke="#4a4846" stroke-width="1"/><rect x="2" y="2" width="12" height="9" fill="#161616"/><rect x="2.5" y="2.5" width="11" height="8" fill="#262626"/><rect x="2.5" y="2.5" width="11" height="3" fill="#3a3a3a" opacity=".6"/><path d="M2.9 3 L5.7 4.5 L2.9 6 M6.8 5.6 H9.2" stroke="#fafafa" stroke-width="1.1" fill="none"/><rect x="2" y="12" width="12" height="1" fill="#959391"/></svg><svg class="abs" width="18" height="18" viewBox="-9 -9 18 18" style="left:982.4px;top:477.7px"><defs><linearGradient id="g9" x1="0" y1="0" x2="0" y2="1"><stop offset="0" stop-color="#d0cecd"/><stop offset="1" stop-color="#b8b6b5"/></linearGradient></defs><circle cx="0" cy="0.6" r="7.3" fill="#fff" fill-opacity=".55"/><circle cx="0" cy="0" r="7.1" fill="url(#g9)" stroke="#7c7a78" stroke-width="0.7"/><circle cx="0" cy="0.3" r="0.8" fill="#fafafa"/></svg><svg class="abs" width="18" height="18" viewBox="-9 -9 18 18" style="left:1845.5px;top:477.7px"><defs><linearGradient id="g10" x1="0" y1="0" x2="0" y2="1"><stop offset="0" stop-color="#d0cecd"/><stop offset="1" stop-color="#b8b6b5"/></linearGradient></defs><circle cx="0" cy="0.6" r="7.3" fill="#fff" fill-opacity=".55"/><circle cx="0" cy="0" r="7.1" fill="url(#g10)" stroke="#7c7a78" stroke-width="0.7"/><path d="M-3 -1.2 L0 1.8 L3 -1.2" stroke="#7a7876" stroke-width="1.2" fill="none"/><path d="M-3 -0.2 L0 2.8 L3 -0.2" stroke="#fff" stroke-opacity=".7" stroke-width="0.8" fill="none"/></svg><svg class="abs" width="18" height="18" viewBox="-9 -9 18 18" style="left:1868.4px;top:477.7px"><defs><linearGradient id="g11" x1="0" y1="0" x2="0" y2="1"><stop offset="0" stop-color="#d0cecd"/><stop offset="1" stop-color="#b8b6b5"/></linearGradient></defs><circle cx="0" cy="0.6" r="7.3" fill="#fff" fill-opacity=".55"/><circle cx="0" cy="0" r="7.1" fill="url(#g11)" stroke="#7c7a78" stroke-width="0.7"/><path d="M-3 1.6 L0 -1.4 L3 1.6" stroke="#7a7876" stroke-width="1.2" fill="none"/><path d="M-3 2.6 L0 -0.4 L3 2.6" stroke="#fff" stroke-opacity=".7" stroke-width="0.8" fill="none"/></svg><svg class="abs" width="18" height="18" viewBox="-9 -9 18 18" style="left:1891.4px;top:477.7px"><defs><linearGradient id="g12" x1="0" y1="0" x2="0" y2="1"><stop offset="0" stop-color="#d0cecd"/><stop offset="1" stop-color="#b8b6b5"/></linearGradient></defs><circle cx="0" cy="0.6" r="7.3" fill="#fff" fill-opacity=".55"/><circle cx="0" cy="0" r="7.1" fill="url(#g12)" stroke="#7c7a78" stroke-width="0.7"/><path d="M-2.8 -2.6 L2.8 3 M2.8 -2.6 L-2.8 3" stroke="#7a7876" stroke-width="1.2" fill="none"/></svg><div class="menubar" style="left:0;top:499px;height:22px;line-height:22px"><span class="mi" style="left:965.3px;letter-spacing:0.85px">Файл</span><span class="mi" style="left:1016.3px;letter-spacing:0.60px">Правка</span><span class="mi" style="left:1081.3px;letter-spacing:0.85px">Вид</span><span class="mi" style="left:1124.3px;letter-spacing:0.95px">Закладки</span><span class="mi" style="left:1207.1px;letter-spacing:0.90px">Настройка</span><span class="mi" style="left:1297.2px;letter-spacing:0.77px">Справка</span></div>
</div></body></html>
